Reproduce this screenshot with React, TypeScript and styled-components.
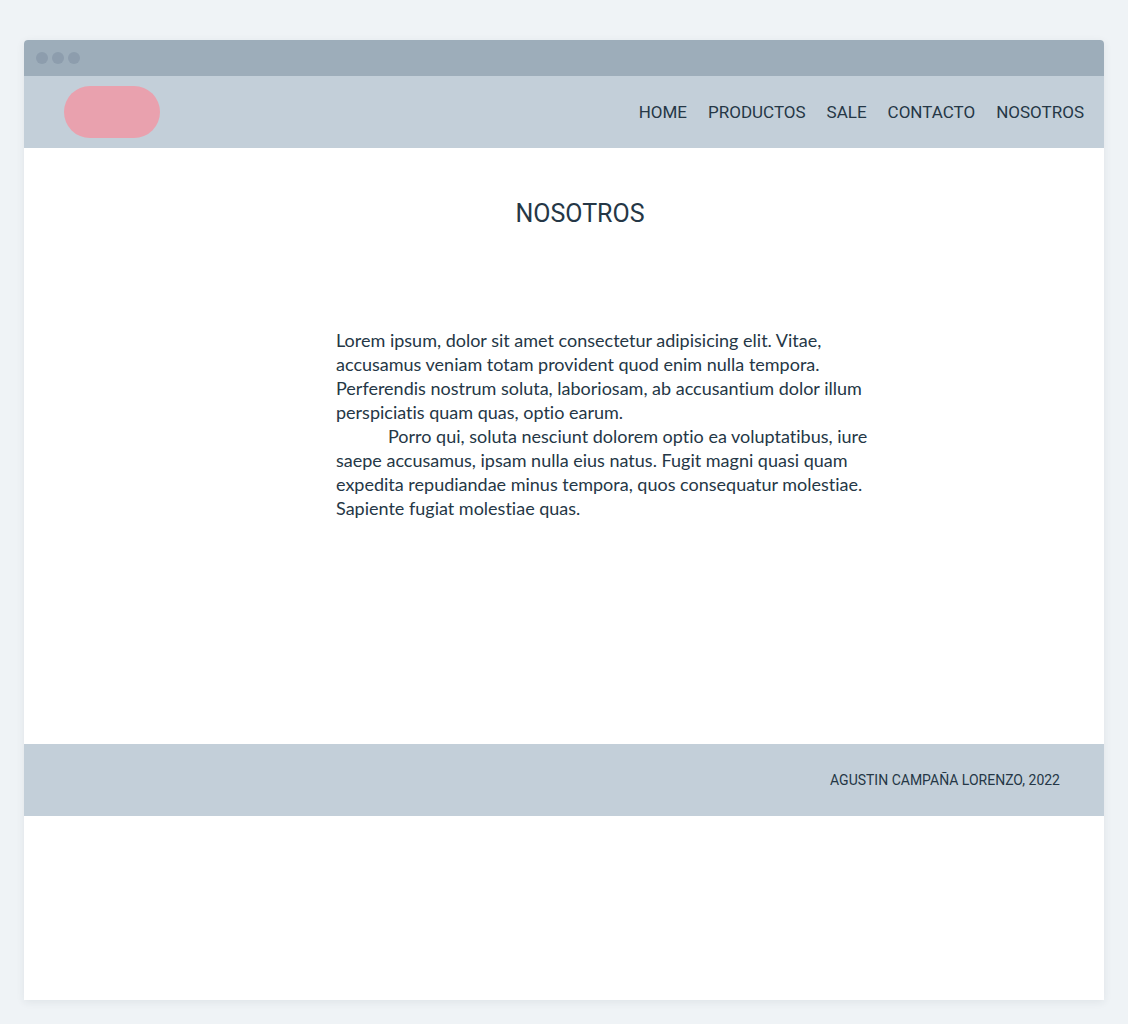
import React from "react";
import styled, { createGlobalStyle } from "styled-components";

const GlobalStyle = createGlobalStyle`
  * {
    box-sizing: border-box;
  }
  body {
    margin: 0;
    background: #eff3f6;
    color: #253746;
    font-family: Roboto, "Liberation Sans", sans-serif;
  }
`;

const Page = styled.div`
  display: flex;
  flex-direction: column;
  min-height: 100vh;
  padding: 40px 24px 24px;
`;

const BrowserWindow = styled.div`
  display: flex;
  flex: 1;
  flex-direction: column;
  overflow: hidden;
  border-radius: 4px 4px 0 0;
  background: #ffffff;
  box-shadow: 0 2px 8px rgba(37, 55, 70, 0.08);
`;

const TitleBar = styled.div`
  display: flex;
  align-items: center;
  gap: 4px;
  height: 36px;
  padding: 0 12px;
  background: #9dadba;
`;

const WindowDot = styled.span`
  width: 12px;
  height: 12px;
  border-radius: 50%;
  background: #8d9dad;
`;

const Header = styled.header`
  display: flex;
  align-items: center;
  justify-content: space-between;
  height: 72px;
  padding: 0 20px 0 40px;
  background: #c3cfd9;
`;

const Logo = styled.a`
  width: 96px;
  height: 52px;
  border-radius: 26px;
  background: #e9a1ae;
`;

const Nav = styled.nav`
  display: flex;
  gap: 21px;
`;

const NavLink = styled.a`
  color: inherit;
  font-size: 17px;
  line-height: 24px;
  text-decoration: none;
`;

const Main = styled.main`
  display: flex;
  flex-direction: column;
  align-items: center;
  gap: 96px;
  padding: 48px 0 224px 32px;
`;

const Title = styled.h1`
  margin: 0;
  font-size: 25px;
  font-weight: 400;
  line-height: 36px;
`;

const Article = styled.article`
  width: 100%;
  max-width: 536px;
  margin-left: 48px;
  font-family: Lato, Roboto, sans-serif;
  font-variant-ligatures: none;
`;

const Paragraph = styled.p<{ $indent?: boolean }>`
  margin: 0;
  font-size: 18px;
  line-height: 24px;
  text-indent: ${({ $indent }) => ($indent ? "52px" : "0")};
`;

const Footer = styled.footer`
  display: flex;
  align-items: center;
  justify-content: flex-end;
  height: 72px;
  padding: 0 44px;
  background: #c3cfd9;
  font-size: 14px;
  line-height: 20px;
`;

const links = ["HOME", "PRODUCTOS", "SALE", "CONTACTO", "NOSOTROS"];

export default function App() {
  return (
    <Page>
      <GlobalStyle />
      <BrowserWindow>
        <TitleBar>
          <WindowDot />
          <WindowDot />
          <WindowDot />
        </TitleBar>
        <Header>
          <Logo href="#home" aria-label="Home" />
          <Nav>
            {links.map((link) => (
              <NavLink key={link} href={`#${link.toLowerCase()}`}>
                {link}
              </NavLink>
            ))}
          </Nav>
        </Header>
        <Main>
          <Title>NOSOTROS</Title>
          <Article>
            <Paragraph>
              Lorem ipsum, dolor sit amet consectetur adipisicing elit. Vitae,
              <br />
              accusamus veniam totam provident quod enim nulla tempora.
              <br />
              Perferendis nostrum soluta, laboriosam, ab accusantium dolor illum
              <br />
              perspiciatis quam quas, optio earum.
            </Paragraph>
            <Paragraph $indent>
              Porro qui, soluta nesciunt dolorem optio ea voluptatibus, iure
              <br />
              saepe accusamus, ipsam nulla eius natus. Fugit magni quasi quam
              <br />
              expedita repudiandae minus tempora, quos consequatur molestiae.
              <br />
              Sapiente fugiat molestiae quas.
            </Paragraph>
          </Article>
        </Main>
        <Footer>AGUSTIN CAMPAÑA LORENZO, 2022</Footer>
      </BrowserWindow>
    </Page>
  );
}
